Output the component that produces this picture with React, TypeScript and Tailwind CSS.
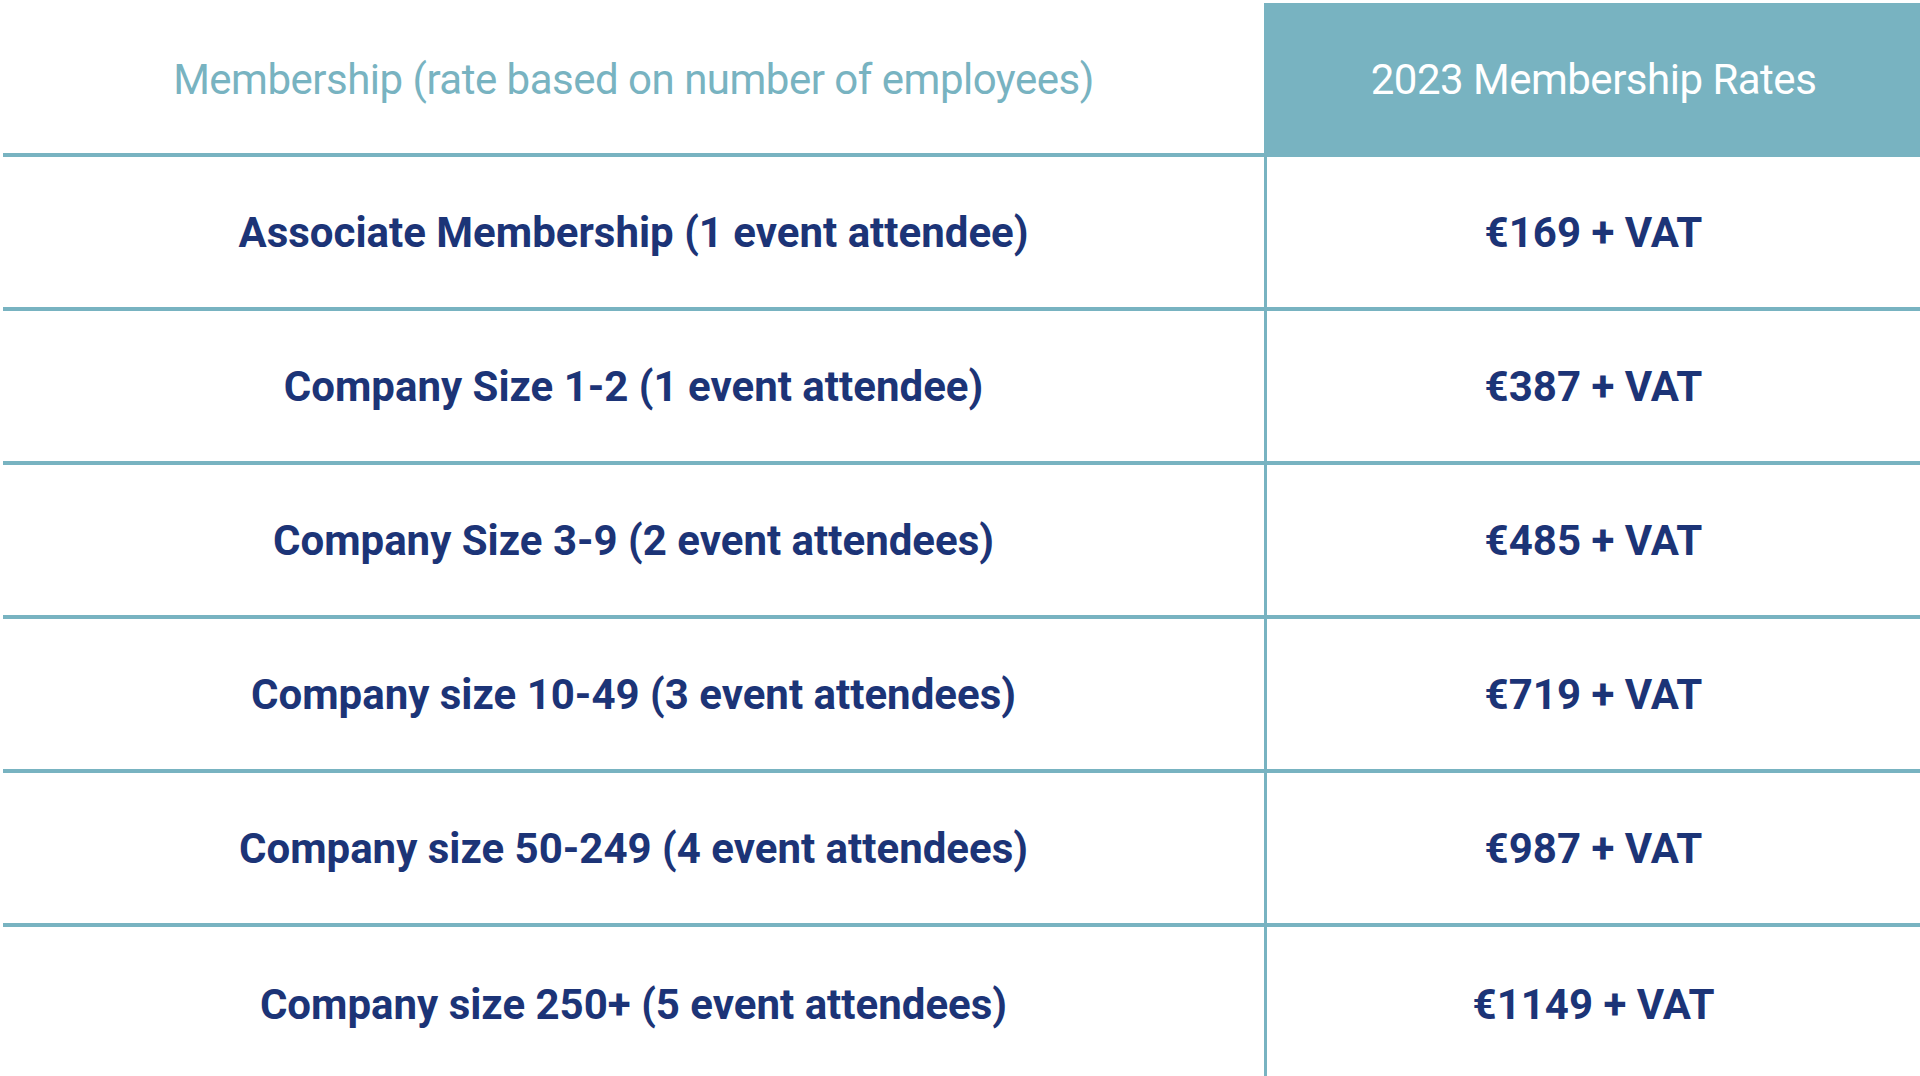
import React from "react";

const rows: [string, string][] = [
  ["Associate Membership (1 event attendee)", "€169 + VAT"],
  ["Company Size 1-2 (1 event attendee)", "€387 + VAT"],
  ["Company Size 3-9 (2 event attendees)", "€485 + VAT"],
  ["Company size 10-49 (3 event attendees)", "€719 + VAT"],
  ["Company size 50-249 (4 event attendees)", "€987 + VAT"],
  ["Company size 250+ (5 event attendees)", "€1149 + VAT"],
];

export default function App() {
  return (
    <div className="w-[1920px] h-[1076px] overflow-hidden bg-white pt-[3px] pl-[3px]" style={{ fontFamily: "Roboto, 'Liberation Sans', sans-serif" }}>
      <div className="grid grid-cols-[1264px_1fr]">
        <div className="h-[154px] flex items-center justify-center pt-[3px] border-b-4 border-r-[3px] border-[#78b3c1] text-[#78b3c1] text-[42px] tracking-[-0.5px]">
          Membership (rate based on number of employees)
        </div>
        <div className="h-[154px] flex items-center justify-center pt-[3px] border-b-4 border-[#78b3c1] bg-[#78b3c1] text-white text-[42px] tracking-[-0.5px]">
          2023 Membership Rates
        </div>
        {rows.map(([a, b], i) => (
          <React.Fragment key={i}>
            <div className={`h-[154px] flex items-center justify-center border-r-[3px] border-[#78b3c1] font-bold text-[#1c3477] text-[42px] ${i < rows.length - 1 ? "border-b-4" : ""}`}>
              {a}
            </div>
            <div className={`h-[154px] flex items-center justify-center border-[#78b3c1] font-bold text-[#1c3477] text-[42px] ${i < rows.length - 1 ? "border-b-4" : ""}`}>
              {b}
            </div>
          </React.Fragment>
        ))}
      </div>
    </div>
  );
}
